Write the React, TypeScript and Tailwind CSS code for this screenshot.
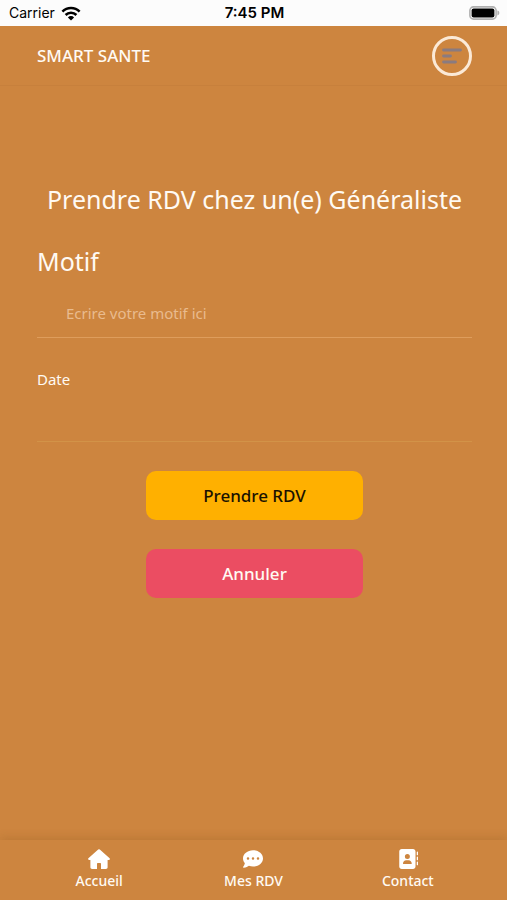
import type { ReactNode } from 'react';
import { FaAddressBook, FaCommentDots } from 'react-icons/fa6';

function WifiIcon() {
  return (
    <svg className="h-[15px] w-[20px]" viewBox="0 0 20 15" fill="none" stroke="currentColor" strokeWidth={2.6}>
      <path d="M1.4 5.6a12.2 12.2 0 0 1 17.2 0" />
      <path d="M4.6 9a7.6 7.6 0 0 1 10.8 0" />
      <path d="M10 14.6 6.9 11.4a4.4 4.4 0 0 1 6.2 0Z" fill="currentColor" stroke="none" />
    </svg>
  );
}

function BatteryIcon() {
  return (
    <svg className="h-[14px] w-[31px]" viewBox="0 0 31 14">
      <rect x="0.9" y="0.9" width="26.2" height="12.2" rx="3.6" fill="#fff" stroke="#b0b0b0" strokeWidth={1.6} />
      <rect x="2.6" y="2.4" width="22.8" height="9.2" rx="2" fill="#000" />
      <path d="M28.4 4.6c1.2.3 1.9 1.2 1.9 2.4s-.7 2.1-1.9 2.4Z" fill="#b0b0b0" />
    </svg>
  );
}

function HomeIcon() {
  return (
    <svg className="h-[20px] w-[22px]" viewBox="0 0 22 20" fill="currentColor">
      <path d="M10.2.5a1.2 1.2 0 0 1 1.6 0L21.6 9.2c.7.8.3 1.8-.7 1.8h-1.3v7.3c0 1-.7 1.7-1.7 1.7H13v-5c0-.6-.4-1-1-1h-2c-.6 0-1 .4-1 1v5H4.1c-1 0-1.700-.7-1.700-1.700V11H1.1C.1 11-.3 10 .4 9.2Z" />
    </svg>
  );
}

function MenuIcon() {
  return (
    <svg className="h-[16px] w-[20px]" viewBox="0 0 20 16" stroke="#8a7b80" strokeWidth={2.8} strokeLinecap="round">
      <path d="M1.5 2h17M1.5 8h7M1.5 14h12" />
    </svg>
  );
}

const TABS: { label: string; icon: ReactNode }[] = [
  { label: 'Accueil', icon: <HomeIcon /> },
  { label: 'Mes RDV', icon: <FaCommentDots size={20} /> },
  { label: 'Contact', icon: <FaAddressBook size={20} /> },
];

function StatusBar() {
  return (
    <div className="grid h-[26px] grid-cols-3 items-center bg-[#fcfcfc] pr-[7px] pl-[9px] font-['Inter',sans-serif] text-sm text-black">
      <div className="flex items-center gap-[6px]">
        <span>Carrier</span>
        <WifiIcon />
      </div>
      <span className="text-center text-[15px] font-semibold">7:45 PM</span>
      <div className="flex justify-end">
        <BatteryIcon />
      </div>
    </div>
  );
}

export default function App() {
  return (
    <div className="flex min-h-screen flex-col bg-[#cd853f] font-['Noto_Sans',sans-serif] text-[#fffaf3]">
      <StatusBar />

      <header className="flex h-[60px] items-center justify-between border-b border-[#c7803c] pr-[35px] pl-[37px]">
        <span className="text-[17px] font-medium">SMART SANTE</span>
        <button
          type="button"
          aria-label="Menu"
          className="flex size-[40px] items-center justify-center rounded-full border-[3px] border-[#fbe9d6]"
        >
          <MenuIcon />
        </button>
      </header>

      <main className="flex-1 pt-[95px] pr-[35px] pl-[37px]">
        <h1 className="text-center text-[25px] leading-9">Prendre RDV chez un(e) Généraliste</h1>

        <form className="flex flex-col">
          <label htmlFor="motif" className="mt-[26px] text-[25px] leading-9">
            Motif
          </label>
          <input
            id="motif"
            type="text"
            placeholder="Ecrire votre motif ici"
            className="mt-[10px] h-[49px] border-b border-[#de9d5c] px-[29px] text-[15px] outline-none placeholder:text-[#e9bb8e]"
          />

          <label htmlFor="date" className="mt-[29px] text-[15px] leading-6">
            Date
          </label>
          <input id="date" type="text" className="h-[51px] border-b border-[#d29348] px-[29px] text-[15px] outline-none" />

          <div className="mt-[29px] flex flex-col items-center gap-[29px]">
            <button type="submit" className="h-[49px] w-1/2 rounded-[10px] bg-[#ffb000] text-[17px] font-medium text-[#1a1200]">
              Prendre RDV
            </button>
            <button type="button" className="h-[49px] w-1/2 rounded-[10px] bg-[#eb4d62] text-[17px] font-medium">
              Annuler
            </button>
          </div>
        </form>
      </main>

      <nav className="grid h-[60px] grid-cols-3 px-[22px] shadow-[0_-3px_8px_rgba(120,70,20,0.18)]">
        {TABS.map((tab) => (
          <a key={tab.label} href="#" className="flex flex-col items-center pt-[9px] text-sm leading-6 font-medium">
            <span className="flex h-5 items-center text-white">{tab.icon}</span>
            {tab.label}
          </a>
        ))}
      </nav>
    </div>
  );
}
